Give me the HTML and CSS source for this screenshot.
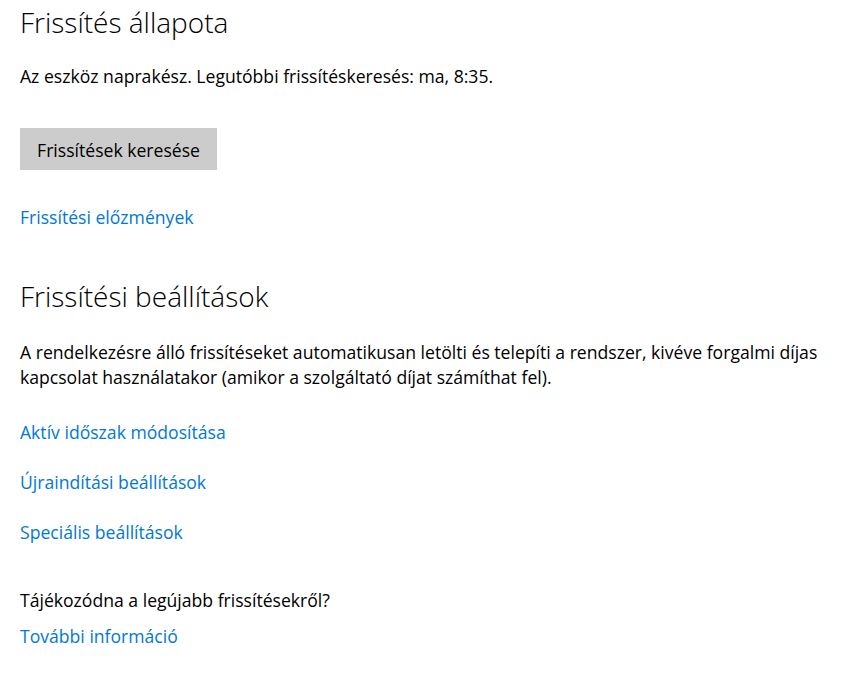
FILE: index.html
```html
<!DOCTYPE html>
<html lang="hu">
<head>
<meta charset="utf-8">
<title>Frissítés állapota</title>
<link rel="stylesheet" href="styles.css">
</head>
<body>
<main class="page">
  <section class="section">
    <h1 class="title">Frissítés állapota</h1>
    <p class="text status">Az eszköz naprakész. Legutóbbi frissítéskeresés: ma, 8:35.</p>
    <button class="btn" type="button">Frissítések keresése</button>
    <a class="link history" href="#">Frissítési előzmények</a>
  </section>
  <section class="section">
    <h2 class="title title-2">Frissítési beállítások</h2>
    <p class="text desc">A rendelkezésre álló frissítéseket automatikusan letölti és telepíti a rendszer, kivéve forgalmi díjas kapcsolat használatakor (amikor a szolgáltató díjat számíthat fel).</p>
    <a class="link opt first" href="#">Aktív időszak módosítása</a>
    <a class="link opt" href="#">Újraindítási beállítások</a>
    <a class="link opt" href="#">Speciális beállítások</a>
    <p class="text question">Tájékozódna a legújabb frissítésekről?</p>
    <a class="link more" href="#">További információ</a>
  </section>
</main>
</body>
</html>
```
FILE: styles.css
```css
html, body {
  margin: 0;
  padding: 0;
  background: #ffffff;
}
body {
  font-family: "Open Sans", "Noto Sans", sans-serif;
  color: #000000;
}
.page {
  display: flex;
  flex-direction: column;
  padding: 3px 0 0 20px;
}
.section {
  display: flex;
  flex-direction: column;
  align-items: flex-start;
}
.title {
  margin: 0;
  font-size: 28px;
  font-weight: 300;
  line-height: 38px;
  color: #000000;
}
.title-2 {
  margin-top: 47px;
}
.text {
  margin: 0;
  font-size: 17.6px;
  line-height: 25px;
}
.status {
  margin-top: 23px;
}
.btn {
  margin-top: 39px;
  width: 197px;
  height: 42px;
  padding: 10px 0 7px;
  border: 0;
  background: #cccccc;
  font-family: inherit;
  font-size: 17.6px;
  line-height: 25px;
  color: #000000;
  text-align: center;
}
.link {
  display: block;
  font-size: 17.6px;
  line-height: 25px;
  color: #0078d7;
  text-decoration: none;
}
.history {
  margin-top: 35px;
}
.desc {
  margin-top: 25px;
  max-width: 818px;
}
.opt {
  margin-top: 25px;
}
.opt.first {
  margin-top: 30px;
}
.question {
  margin-top: 43px;
}
.more {
  margin-top: 11px;
}
```
